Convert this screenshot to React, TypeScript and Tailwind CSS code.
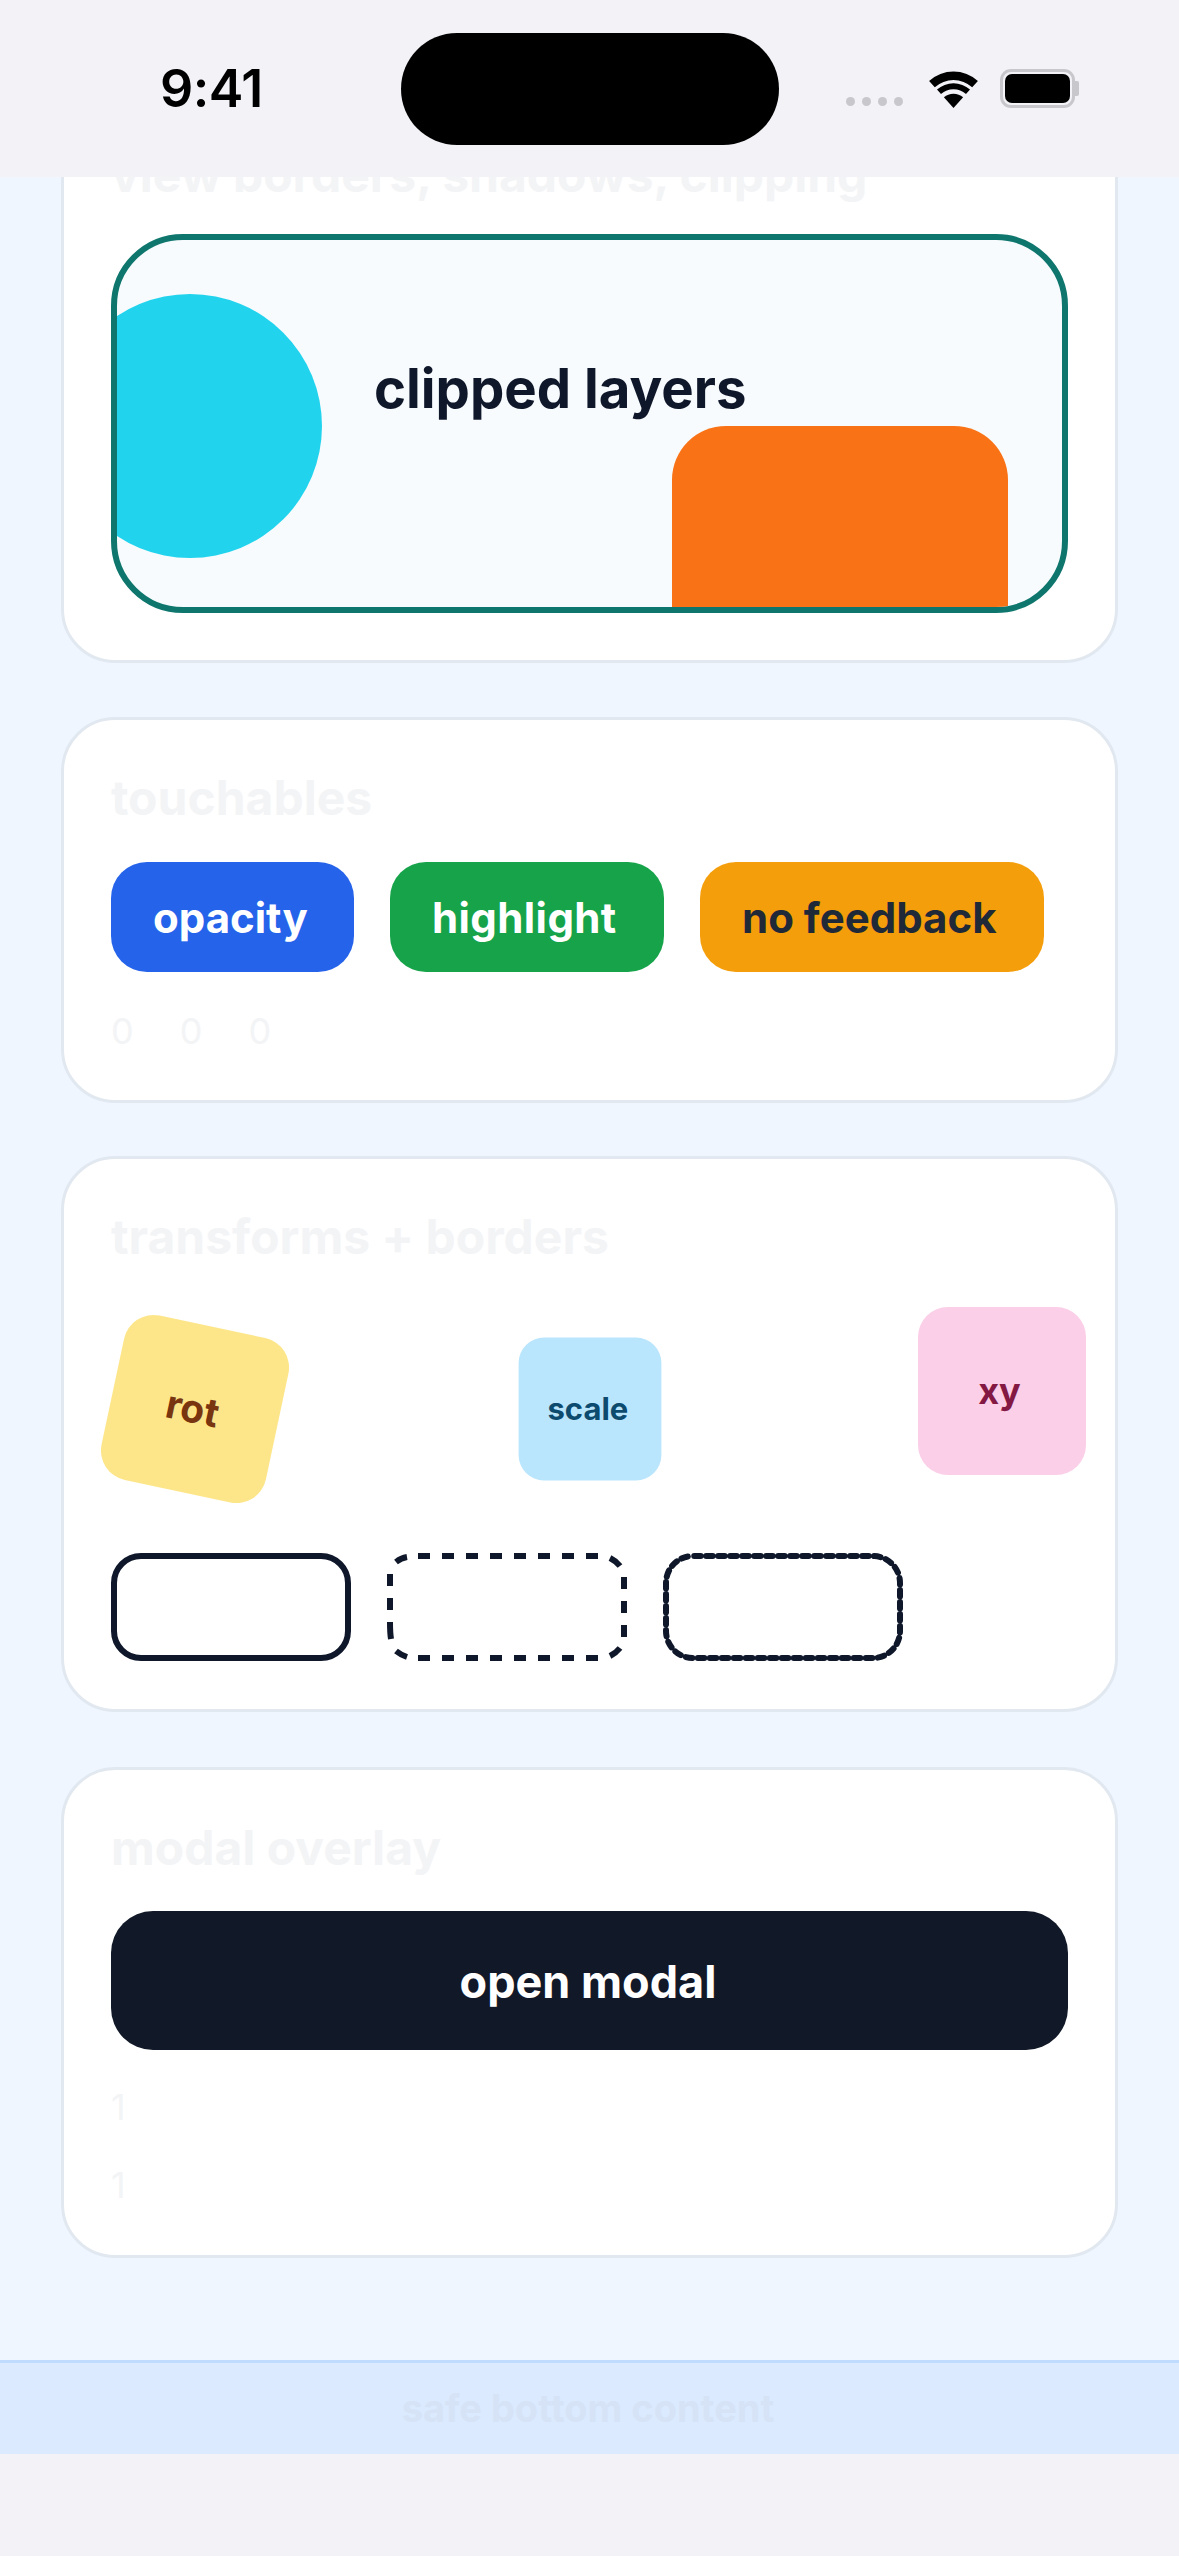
import React from 'react';

const FONT = "font-['Inter',sans-serif]";
const INK = '#0f172a';

const Card: React.FC<{ title: string; className?: string; children: React.ReactNode }> = ({ title, className = '', children }) => (
  <div className={`bg-white border-[3px] border-[#e2e8f0] rounded-[54px] px-[47px] py-[48px] ${className}`}>
    <h2 className="text-[48px] leading-[60px] font-bold text-[#f3f4f6] mb-[34px]">{title}</h2>
    {children}
  </div>
);

const Faint: React.FC<{ children: React.ReactNode }> = ({ children }) => (
  <span className="block text-[36px] leading-[42px] text-[#f3f4f6]">{children}</span>
);

const StatusBar = () => (
  <div className="relative z-10 h-[177px] shrink-0 bg-[#f2f2f7] flex items-center pl-[160px] pr-[100px]">
    <span className="w-[241px] text-[52px] leading-[60px] font-semibold text-black tracking-[-0.5px]">9:41</span>
    <div className="w-[378px] h-[112px] rounded-full bg-black" />
    <div className="ml-auto flex items-end">
      <div className="flex gap-[7px] mb-[2px] mr-[26px]">
        <span className="w-[9px] h-[9px] rounded-full bg-[#c7c7cc]" />
        <span className="w-[9px] h-[9px] rounded-full bg-[#c7c7cc]" />
        <span className="w-[9px] h-[9px] rounded-full bg-[#c7c7cc]" />
        <span className="w-[9px] h-[9px] rounded-full bg-[#c7c7cc]" />
      </div>
      <svg width="49" height="37" viewBox="0 0 49 37" className="mr-[22px]">
        <path d="M0.1 9.9A36.5 36.5 0 0 1 48.9 9.9L43.2 16.2A28 28 0 0 0 5.8 16.2Z" fill="#000" />
        <path d="M8 18.6A24.7 24.7 0 0 1 41 18.6L37 23.1A18.7 18.7 0 0 0 12 23.1Z" fill="#000" />
        <path d="M14.9 26.3A14.4 14.4 0 0 1 34.1 26.3L24.5 37Z" fill="#000" />
      </svg>
      <div className="flex items-center">
        <div className="w-[75px] h-[39px] rounded-[11px] border-[3px] border-[#c8c8cc] p-[2px]">
          <div className="w-full h-full rounded-[7px] bg-black" />
        </div>
        <div className="w-[4px] h-[15px] rounded-r-[2px] bg-[#c8c8cc]" />
      </div>
    </div>
  </div>
);

// the browser's own dashed and dotted borders space their marks differently, so these two are drawn
const DashedBox = () => (
  <svg width="240" height="108" viewBox="0 0 240 108" fill="none" stroke={INK} strokeWidth="6" className="shrink-0">
    <path d="M31 3H212M31 105H212" strokeDasharray="12 12" />
    <path d="M237 24V84" strokeDasharray="12 12" />
    <path d="M3 21V57" strokeDasharray="12 12" />
    <path d="M3 69C3 76 3 80 4 86" />
    <path d="M9 9Q14 5 20 4M223 5Q229 8 233 13M9 98Q14 102 20 104M233 95Q229 100 223 103" />
  </svg>
);

const BeadedBox = () => (
  <svg width="240" height="108" viewBox="0 0 240 108" fill="none" className="shrink-0">
    <rect x="3" y="3" width="234" height="102" rx="27" stroke={INK} strokeWidth="6" strokeLinecap="round" strokeDasharray="6.5 5.5" strokeDashoffset="-1.2" />
  </svg>
);

export default function App() {
  return (
    <div className={`${FONT} w-[1179px] h-[2556px] flex flex-col bg-[#f2f2f7] overflow-hidden`}>
      <StatusBar />

      <main className="h-[2183px] shrink-0 overflow-hidden bg-[#eff6ff] px-[61px] flex flex-col gap-[55px]">
        <Card title="view borders, shadows, clipping" className="-mt-[83px] -mb-[1px] !pb-[47px]">
          <div className="relative h-[379px] -mt-[5px] rounded-[72px] border-[6px] border-[#0f766e] bg-[#f8fbfd] overflow-hidden">
            <div className="absolute -left-[59px] top-[54px] w-[264px] h-[264px] rounded-full bg-[#22d3ee]" />
            <div className="absolute right-[54px] -bottom-[60px] w-[336px] h-[241px] rounded-[54px] bg-[#f97316]" />
            <span className="absolute left-[257px] top-[115px] text-[54.5px] leading-[66px] font-bold text-[#0f172a]">clipped layers</span>
          </div>
        </Card>

        <Card title="touchables" className="-mb-[2px]">
          <div className="flex gap-[36px]">
            <div className="w-[243px] h-[110px] pl-[42px] rounded-[36px] bg-[#2563eb] flex items-center text-[42px] font-bold text-white">opacity</div>
            <div className="w-[274px] h-[110px] pl-[42px] rounded-[36px] bg-[#16a34a] flex items-center text-[42px] font-bold tracking-[0.4px] text-white">highlight</div>
            <div className="w-[344px] h-[110px] pl-[42px] rounded-[36px] bg-[#f59e0b] flex items-center text-[42px] font-bold text-[#1f2937]">no feedback</div>
          </div>
          <div className="flex gap-[46px] mt-[38px]">
            <Faint>0</Faint>
            <Faint>0</Faint>
            <Faint>0</Faint>
          </div>
        </Card>

        <Card title="transforms + borders">
          <div className="flex justify-between py-[24px] mb-[36px]">
            <div className="w-[168px] h-[168px] rounded-[30px] pr-[5px] bg-[#fde68a] rotate-12 flex items-center justify-center text-[39px] font-bold text-[#78350f]">rot</div>
            <div className="w-[168px] h-[168px] rounded-[30px] pr-[5px] bg-[#bae6fd] scale-[0.85] flex items-center justify-center text-[36.5px] font-bold text-[#0c4a6e]">scale</div>
            <div className="w-[168px] h-[168px] rounded-[30px] pr-[5px] bg-[#fbcfe8] translate-x-[18px] -translate-y-[18px] flex items-center justify-center text-[36px] font-bold text-[#831843]">xy</div>
          </div>
          <div className="flex gap-[36px]">
            <div className="w-[240px] h-[108px] rounded-[30px] border-[6px] border-solid border-[#0f172a]" />
            <DashedBox />
            <BeadedBox />
          </div>
        </Card>

        <Card title="modal overlay" className="!pb-[49px]">
          <div className="h-[139px] -mt-[1px] pt-[3px] pr-[3px] rounded-[42px] bg-[#111827] flex items-center justify-center text-[45px] font-bold text-white">open modal</div>
          <div className="flex flex-col gap-[36px] mt-[36px]">
            <Faint>1</Faint>
            <Faint>1</Faint>
          </div>
        </Card>
      </main>

      <div className="h-[94px] shrink-0 pr-[3px] bg-[#dbeafe] border-t-[3px] border-[#bfdbfe] flex items-center justify-center text-[38px] font-bold text-[#d6e3f7]">
        safe bottom content
      </div>
    </div>
  );
}
